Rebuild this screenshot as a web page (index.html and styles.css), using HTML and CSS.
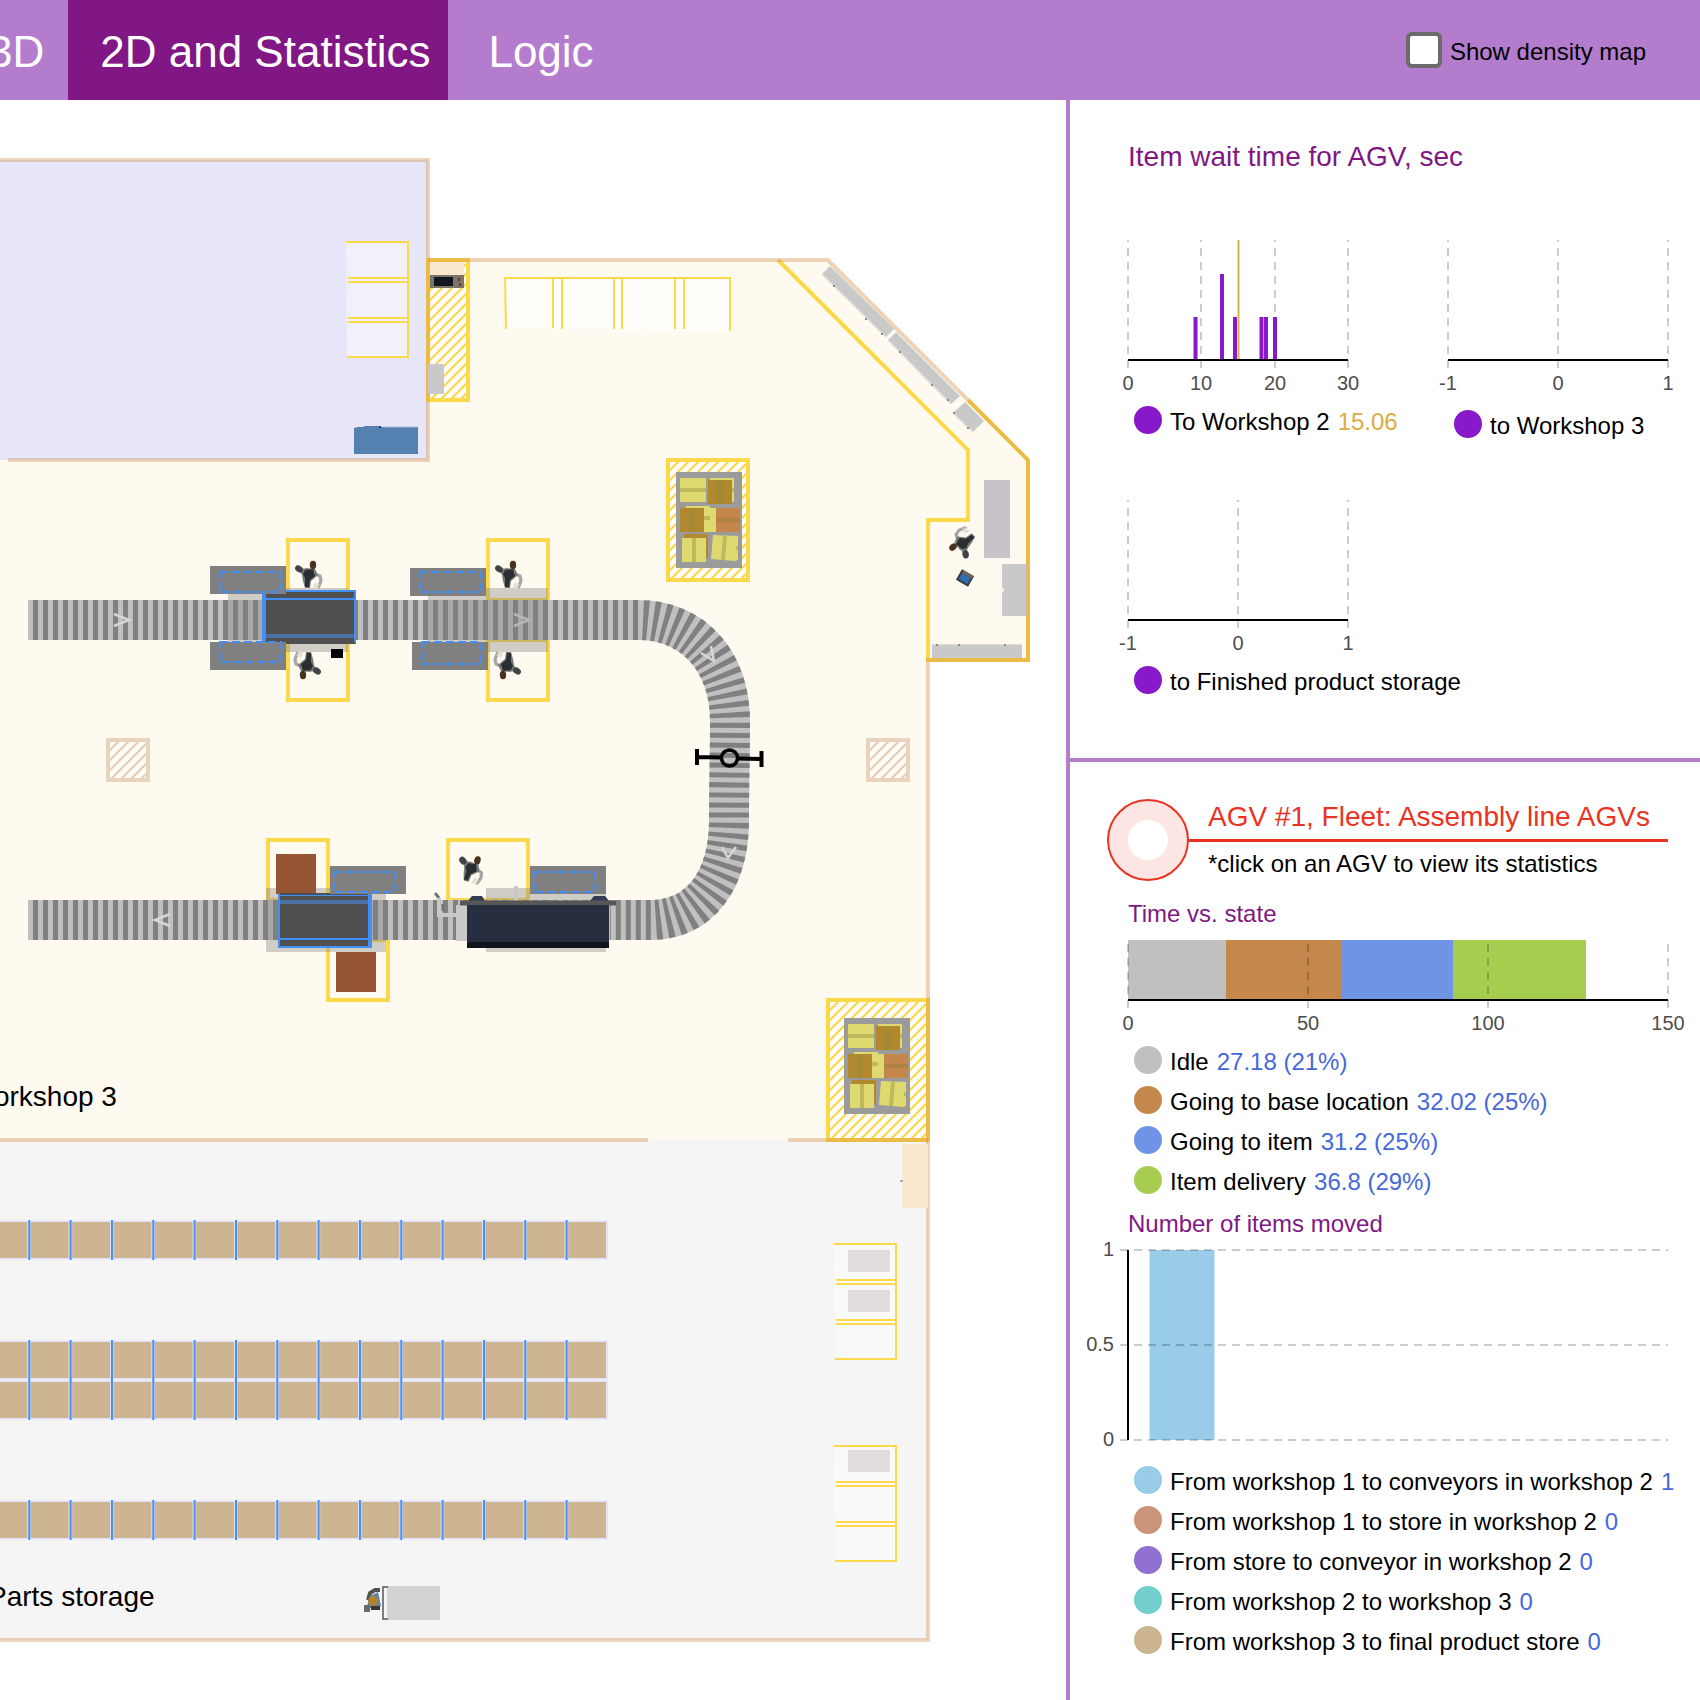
FILE: index.html
```html
<!DOCTYPE html>
<html lang="en">
<head>
<meta charset="utf-8">
<title>AGV simulation: 2D and Statistics</title>
<link rel="stylesheet" href="styles.css">
</head>
<body>
<header class="topbar">
  <nav class="tabs">
    <button class="tab" type="button">3D</button>
    <button class="tab tab--active" type="button">2D and Statistics</button>
    <button class="tab" type="button">Logic</button>
  </nav>
  <div class="density">
    <input class="density__box" type="checkbox" id="density">
    <label class="density__label" for="density">Show density map</label>
  </div>
</header>

<main class="workspace">
  <section class="plan" aria-label="Factory floor plan">
    <svg class="plan__drawing" viewBox="0 100 1066 1600" role="img" aria-label="Workshops, conveyors and parts storage">
      <defs>
        <pattern id="hatch-yellow" width="10" height="10" patternUnits="userSpaceOnUse">
          <rect width="10" height="10" fill="#fffdf8"/>
          <path d="M-2 2L2 -2M-2 12L12 -2M8 12L12 8" stroke="#fad648" stroke-width="2"/>
        </pattern>
        <pattern id="hatch-wall" width="10" height="10" patternUnits="userSpaceOnUse">
          <rect width="10" height="10" fill="#fffcf6"/>
          <path d="M-2 2L2 -2M-2 12L12 -2M8 12L12 8" stroke="#e6cbb2" stroke-width="2"/>
        </pattern>
        <g id="worker">
          <path d="M-9 -6L-2 -4L6 -1L11 1L12 6L9 13" fill="none" stroke="#a3a5a6" stroke-width="3.200"/>
          <path d="M10 9L8 14M5 13L7 8" fill="none" stroke="#d6cdb8" stroke-width="1.500"/>
          <path d="M-9 -4L-3 -7L6 -6L9 0L2 6L1 13L-4 13L-6 6L-7 0Z" fill="#77797b"/>
          <path d="M-4 -5L4 -6L6 1L1 5L0 12L-4 12L-4 3L-6 -1Z" fill="#2b2e31"/>
          <ellipse cx="-10" cy="-6" rx="4.200" ry="3.200" transform="rotate(35 -10 -6)" fill="#3f4346"/>
          <ellipse cx="4" cy="-10" rx="3.200" ry="4.200" fill="#4a3220"/>
        </g>
        <g id="pallet">
          <rect x="676" y="472" width="66" height="96" fill="#9b9b9b"/>
          <path d="M680 478h26v24h-26zM710 478h24v24h-24zM686 506h24v26h-24zM696 508h20v24h-20z" fill="#dfda70"/>
          <path d="M680 490h26M704 518h6M730 490h4" stroke="#bfb95c" stroke-width="4"/>
          <path d="M708 480h24v24h-24zM680 508h24v24h-24zM684 534h24v24h-24z" fill="#b1882e"/>
          <path d="M720 480v24M692 508v24" stroke="#a08a37" stroke-width="4"/>
          <rect x="716" y="508" width="24" height="24" fill="#c4864b"/>
          <path d="M716 520h24" stroke="#ad8445" stroke-width="4"/>
          <rect x="682" y="538" width="24" height="24" fill="#dfda70"/>
          <path d="M694 538v24" stroke="#bfb95c" stroke-width="4"/>
          <path d="M713 535L738 536L738 560L735 561L711 559Z" fill="#dfda70"/>
          <path d="M725 536L723 560M736 548h2" stroke="#bfb95c" stroke-width="4"/>
        </g>
        <g id="rack">
          <path d="M834 1243h62v117h-61z" fill="#fff" fill-opacity=".45"/>
          <path d="M834 1244h62v115h-61M836 1280h60M836 1284h60M836 1320h60M836 1324h60" fill="none" stroke="#fbd94b" stroke-width="2"/>
        </g>
      </defs>

      <!-- floors -->
      <path d="M0 460H428V260H828L1028 460V660H928V1140H0Z" fill="#fffaf0"/>
      <path d="M0 160H428V460H0Z" fill="#e6e6f8"/>
      <path d="M0 1140H928V1640H0Z" fill="#f5f5f5"/>

      <!-- yellow zones -->
      <g stroke="#fbd94b" stroke-width="4" fill="none">
        <rect x="428" y="260" width="40" height="140" fill="url(#hatch-yellow)"/>
        <rect x="668" y="460" width="80" height="120" fill="url(#hatch-yellow)"/>
        <rect x="828" y="1000" width="100" height="140" fill="url(#hatch-yellow)"/>
        <path d="M778 260L968 450V520H928V660H1028V460L968 400"/>
        <rect x="288" y="540" width="60" height="60"/>
        <rect x="288" y="640" width="60" height="60"/>
        <rect x="488" y="540" width="60" height="60"/>
        <rect x="488" y="640" width="60" height="60"/>
        <rect x="268" y="840" width="60" height="60"/>
        <rect x="328" y="940" width="60" height="60"/>
        <rect x="448" y="840" width="80" height="60"/>
      </g>

      <!-- cabinets along the walls -->
      <g fill="#c9c9c9">
        <path d="M822 274L830 266L894 329L886 337Z"/>
        <path d="M888 340L896 332L960 396L951 404Z"/>
        <path d="M953 413L965 402L984 421L973 432Z"/>
        <rect x="984" y="480" width="26" height="78" fill="#c7c3c8"/>
        <rect x="1002" y="564" width="25" height="52"/>
        <rect x="932" y="645" width="90" height="13"/>
      </g>
      <path d="M932 644.500H1022" stroke="#dedddb"/>
      <path d="M822 274L886 337M888 340L951 404M953 413L973 432" stroke="#dddcd8" stroke-width="1.500"/>
      <path d="M833 285h2v2h-2zM865 318h2v2h-2zM881 333h2v2h-2zM899 351h2v2h-2zM931 384h2v2h-2zM947 399h2v2h-2zM953 412h2v2h-2zM967 427h2v2h-2zM936 644h2v2h-2zM958 644h2v2h-2zM1004 644h2v2h-2z" fill="#8c8c8c"/>
      <circle cx="1002.500" cy="590" r="2" fill="#f3f1ea"/>

      <!-- walls -->
      <g fill="none" stroke="#cd853f" stroke-opacity=".35" stroke-width="4">
        <path d="M0 160H428V460H8"/>
        <path d="M428 260H828L1028 460V660H928V1640H0"/>
        <path d="M0 1140H648M788 1140H928"/>
      </g>
      <g fill="url(#hatch-wall)" stroke="#ead3bd" stroke-width="4">
        <rect x="108" y="740" width="40" height="40"/>
        <rect x="868" y="740" width="40" height="40"/>
      </g>

      <!-- equipment by the entrance -->
      <rect x="430" y="262" width="34" height="13" fill="#fae8cf"/>
      <rect x="430" y="275" width="34" height="13" fill="#7d7466"/>
      <rect x="434" y="277" width="19" height="9" fill="#121822"/>
      <path d="M459 278v3M460 283v3" stroke="#6a3a35" stroke-width="2"/>
      <rect x="428" y="364" width="16" height="30" fill="#c9c9c9"/>
      <path d="M354 428l4 -1h5l2 -1h15l2 1h36v27h-64z" fill="#5581b0"/>
      <path d="M384 427h33" stroke="#a9bdd8"/>
      <path d="M380 426v2" stroke="#333f55" stroke-width="2"/>
      <path d="M902 1144H928V1208H902Z" fill="#fae8d0"/>
      <path d="M900 1180h3v2h-3z" fill="#aaa"/>

      <!-- parking bays -->
      <use href="#rack" x="-488" y="-1002"/>
      <use href="#rack"/>
      <use href="#rack" y="202"/>
      <path d="M506 278H730V331L506 328Z" fill="#fff" fill-opacity=".6"/>
      <path d="M506 329L505 278H730V331M553 278V328M562 278V329M614 278V329M622 278V329M675 278V329M684 278V329" fill="none" stroke="#fbd94b" stroke-width="2"/>
      <path d="M848 1250h42v22h-42zM848 1290h42v22h-42zM848 1450h42v22h-42z" fill="#e0dddc"/>

      <!-- pallets -->
      <use href="#pallet"/>
      <use href="#pallet" x="168" y="546"/>

      <!-- conveyor -->
      <g fill="none" stroke-width="40">
        <path d="M28 620H638C692 620 730 660 730 722C730 760 729 780 729 820C729 880 700 920 650 920H608" stroke="#c0c0c0"/>
        <path d="M28 620H638C692 620 730 660 730 722C730 760 729 780 729 820C729 880 700 920 650 920H608" stroke="#808080" stroke-dasharray="5 5" stroke-dashoffset="5"/>
        <path d="M28 920H610" stroke="#c0c0c0"/>
        <path d="M28 920H610" stroke="#808080" stroke-dasharray="5 5" stroke-dashoffset="5"/>
      </g>
      <g fill="none" stroke="#d6d6d6" stroke-width="2.500">
        <path d="M114 614L129 620L114 626"/>
        <path d="M514 614L529 620L514 626"/>
        <path d="M701 653L714 661L711 646"/>
        <path d="M722 847L728 858L736 847"/>
        <path d="M170 914L155 920L170 926"/>
      </g>
      <g fill="none" stroke="#000" stroke-width="4">
        <path d="M697 749V765M761.500 751V767M697 757L721 757.500M738 758.500L761 759"/>
        <circle cx="729.500" cy="758" r="8" stroke-width="3.500"/>
      </g>

      <!-- station footprints -->
      <g fill="#808080" fill-opacity=".37">
        <rect x="228" y="588" width="120" height="64"/>
        <rect x="428" y="588" width="120" height="64"/>
        <rect x="266" y="888" width="120" height="64"/>
        <rect x="486" y="888" width="120" height="64"/>
      </g>
      <!-- machines over the belt -->
      <rect x="263" y="591" width="92" height="52" fill="#505050" stroke="#438ef7" stroke-width="2"/>
      <path d="M264 590V644" stroke="#438ef7" stroke-width="4"/>
      <path d="M264 599H355" stroke="#438ef7" stroke-width="2"/>
      <path d="M266 636H354" stroke="#4a70a6" stroke-width="4"/>
      <path d="M262 643H355" stroke="#505050" stroke-width="2"/>
      <rect x="331" y="649" width="12" height="9" fill="#000"/>
      <path d="M276 854h40v40h-40zM336 952h40v40h-40z" fill="#955434"/>
      <rect x="279" y="895" width="92" height="52" fill="#505050" stroke="#438ef7" stroke-width="2"/>
      <path d="M370 894V948" stroke="#438ef7" stroke-width="4"/>
      <path d="M280 902H368" stroke="#4a70a6" stroke-width="4"/>
      <path d="M280 939H370" stroke="#438ef7" stroke-width="2"/>
      <path d="M280 894H368" stroke="#505050" stroke-width="2"/>
      <path d="M435 893l4 5M443 904v7" stroke="#777" stroke-width="3"/>
      <path d="M439 898v17h20M516 886v16M560 893v9" fill="none" stroke="#c9c9c9" stroke-width="4"/>
      <rect x="456" y="905" width="11" height="36" fill="#c9c9c9"/>
      <path d="M468 901l4 -5h10l3 5zM590 901l4 -5h11l4 5z" fill="#333c50"/>
      <path d="M460 903H616" stroke="#575757" stroke-width="5"/>
      <rect x="467" y="905" width="142" height="43" fill="#262e40"/>
      <rect x="467" y="942" width="142" height="6" fill="#11141c"/>

      <!-- loading tables -->
      <g fill="#808080">
        <rect x="210" y="566" width="76" height="28"/>
        <rect x="210" y="642" width="76" height="28"/>
        <rect x="410" y="568" width="76" height="28"/>
        <rect x="412" y="642" width="76" height="28"/>
        <rect x="330" y="866" width="76" height="28"/>
        <rect x="530" y="866" width="76" height="28"/>
      </g>
      <g fill="none" stroke="#438ef7" stroke-width="2" stroke-dasharray="8 4">
        <rect x="220" y="572" width="61" height="20"/>
        <rect x="220" y="642" width="61" height="20"/>
        <rect x="420" y="572" width="61" height="20"/>
        <rect x="422" y="642" width="59" height="22"/>
        <rect x="334" y="872" width="61" height="20"/>
        <rect x="534" y="872" width="61" height="20"/>
      </g>

      <!-- people -->
      <use href="#worker" x="309" y="575"/>
      <use href="#worker" x="509" y="575"/>
      <use href="#worker" transform="translate(307 665) rotate(180)"/>
      <use href="#worker" transform="translate(507 665) rotate(180)"/>
      <use href="#worker" transform="translate(471 869) rotate(15)"/>
      <use href="#worker" transform="translate(963 543) rotate(226)"/>
      <g transform="translate(965 578) rotate(30)">
        <rect x="-7" y="-6" width="14" height="12" fill="#3a3a3c"/>
        <rect x="-5" y="-3" width="10" height="7" fill="#2f6eb0"/>
        <rect x="-5" y="-6" width="11" height="3" fill="#6f665c"/>
      </g>

      <!-- storage shelves -->
      <g fill="none">
        <path d="M0 1240H608M0 1360H608M0 1400H608M0 1520H608" stroke="#e2e1f5" stroke-width="39"/>
        <path d="M-10.500 1240H606M-10.500 1360H606M-10.500 1400H606M-10.500 1520H606" stroke="#ceb591" stroke-width="36" stroke-dasharray="37.800 3.533"/>
        <path d="M28.300 1240H570M28.300 1360H570M28.300 1400H570M28.300 1520H570" stroke="#438ef7" stroke-width="40" stroke-dasharray="2 39.333"/>
      </g>

      <!-- pallet jack -->
      <rect x="387" y="1586" width="53" height="34" fill="#d3d3d3"/>
      <path d="M388 1587h-5v32h5" fill="none" stroke="#555" stroke-width="1.500"/>
      <path d="M368 1600L370 1593L375 1590L380 1590" fill="none" stroke="#55504a" stroke-width="4"/>
      <path d="M367 1606L370 1596L378 1592L381 1606L372 1609Z" fill="#5b87ab"/>
      <path d="M371 1608L380 1608" stroke="#3a342c" stroke-width="4"/>
      <circle cx="373" cy="1601" r="5" fill="#b5822b"/>
      <rect x="364" y="1605" width="6" height="7" fill="#6a6a6a"/>

      <text class="plan__label" x="-32" y="1106">Workshop 3</text>
      <text class="plan__label" x="-12" y="1606">Parts storage</text>
    </svg>
  </section>

  <aside class="stats">
    <section class="wait">
      <h2 class="wait__title">Item wait time for AGV, sec</h2>
      <div class="wait__grid">
        <div class="panel">
          <svg class="chart" width="220" height="160">
            <path class="grid" d="M0 128V0M73 128V0M147 128V0M220 128V0"/>
            <path fill="#8719cb" d="M65.500 77h4v43h-4zM92 34h4v86h-4zM105 77h4v43h-4zM131.500 77h4v43h-4zM136 77h4v43h-4zM145 77h4v43h-4z"/>
            <path d="M110.500 0V119" stroke="#dbae48" stroke-width="2"/>
            <path class="axis" d="M0 120H220"/>
            <g class="ticks"><text x="0" y="150">0</text><text x="73" y="150">10</text><text x="147" y="150">20</text><text x="220" y="150">30</text></g>
          </svg>
          <ul class="legend">
            <li class="legend__row"><span class="dot dot--violet"></span><span class="legend__text">To Workshop 2</span><span class="legend__text mean">15.06</span></li>
          </ul>
        </div>
        <div class="panel">
          <svg class="chart" width="220" height="160">
            <path class="grid" d="M0 128V0M110 128V0M220 128V0"/>
            <path class="axis" d="M0 120H220"/>
            <g class="ticks"><text x="0" y="150">-1</text><text x="110" y="150">0</text><text x="220" y="150">1</text></g>
          </svg>
          <ul class="legend legend--spaced">
            <li class="legend__row"><span class="dot dot--violet"></span><span class="legend__text">to Workshop 3</span></li>
          </ul>
        </div>
        <div class="panel">
          <svg class="chart" width="220" height="160">
            <path class="grid" d="M0 128V0M110 128V0M220 128V0"/>
            <path class="axis" d="M0 120H220"/>
            <g class="ticks"><text x="0" y="150">-1</text><text x="110" y="150">0</text><text x="220" y="150">1</text></g>
          </svg>
          <ul class="legend">
            <li class="legend__row"><span class="dot dot--violet"></span><span class="legend__text">to Finished product storage</span></li>
          </ul>
        </div>
      </div>
    </section>

    <section class="agv">
      <div class="agv__head">
        <svg class="agv__badge" width="80" height="80" viewBox="0 0 80 80">
          <circle cx="40" cy="40" r="40" fill="#fde5e3" stroke="#e93323" stroke-width="2"/>
          <circle cx="40" cy="40" r="20" fill="#fff"/>
        </svg>
        <div class="agv__caption">
          <h2 class="agv__title">AGV #1, Fleet: Assembly line AGVs</h2>
          <p class="agv__note">*click on an AGV to view its statistics</p>
        </div>
      </div>

      <div class="agv__body">
        <h3 class="agv__subtitle">Time vs. state</h3>
        <svg class="chart" width="540" height="100">
          <path fill="#c0c0c0" d="M0 0h98v60h-98z"/>
          <path fill="#c4884c" d="M98 0h115v60h-115z"/>
          <path fill="#6f94e5" d="M213 0h112v60h-112z"/>
          <path fill="#a6cd50" d="M325 0h133v60h-133z"/>
          <path class="grid" d="M0 68V4M180 68V4M360 68V4M540 68V4"/>
          <path class="axis" d="M0 60H540"/>
          <g class="ticks"><text x="0" y="90">0</text><text x="180" y="90">50</text><text x="360" y="90">100</text><text x="540" y="90">150</text></g>
        </svg>
        <ul class="legend">
          <li class="legend__row"><span class="dot dot--grey"></span><span class="legend__text">Idle</span><span class="legend__text value">27.18 (21%)</span></li>
          <li class="legend__row"><span class="dot dot--brown"></span><span class="legend__text">Going to base location</span><span class="legend__text value">32.02 (25%)</span></li>
          <li class="legend__row"><span class="dot dot--blue"></span><span class="legend__text">Going to item</span><span class="legend__text value">31.2 (25%)</span></li>
          <li class="legend__row"><span class="dot dot--green"></span><span class="legend__text">Item delivery</span><span class="legend__text value">36.8 (29%)</span></li>
        </ul>

        <h3 class="agv__subtitle">Number of items moved</h3>
        <svg class="chart" width="540" height="210">
          <path fill="#98cce8" d="M21.500 0h65v190h-65z"/>
          <path class="grid" d="M-8 0H540M-8 95H540M-8 190H540"/>
          <path class="axis" d="M0 0V190"/>
          <g class="ticks ticks--side"><text x="-14" y="6">1</text><text x="-14" y="101">0.5</text><text x="-14" y="196">0</text></g>
        </svg>
        <ul class="legend">
          <li class="legend__row"><span class="dot dot--sky"></span><span class="legend__text">From workshop 1 to conveyors in workshop 2</span><span class="legend__text value">1</span></li>
          <li class="legend__row"><span class="dot dot--clay"></span><span class="legend__text">From workshop 1 to store in workshop 2</span><span class="legend__text value">0</span></li>
          <li class="legend__row"><span class="dot dot--purple"></span><span class="legend__text">From store to conveyor in workshop 2</span><span class="legend__text value">0</span></li>
          <li class="legend__row"><span class="dot dot--teal"></span><span class="legend__text">From workshop 2 to workshop 3</span><span class="legend__text value">0</span></li>
          <li class="legend__row"><span class="dot dot--tan"></span><span class="legend__text">From workshop 3 to final product store</span><span class="legend__text value">0</span></li>
        </ul>
      </div>
    </section>
  </aside>
</main>
</body>
</html>
```
FILE: styles.css
```css
* {
  box-sizing: border-box;
}

body {
  margin: 0;
  background: #fff;
  color: #000;
  font-family: "Liberation Sans", Arial, sans-serif;
  font-size: 24px;
  line-height: 28px;
}

h2,
h3,
p,
ul {
  margin: 0;
  padding: 0;
  font-weight: normal;
}

/* Top bar */
.topbar {
  display: flex;
  justify-content: space-between;
  height: 100px;
  padding-right: 54px;
  background: #b47ccd;
  overflow: hidden;
}

.tabs {
  display: flex;
  margin-left: -52px;
}

.tab {
  margin: 0;
  padding: 4px 24px 0 40px;
  border: 0;
  background: transparent;
  color: #fff;
  font: inherit;
  font-size: 44px;
  white-space: nowrap;
  cursor: pointer;
}

.tab--active {
  padding: 4px 18px 0 32px;
  background: #801784;
}

.density {
  display: flex;
  align-items: center;
  gap: 8px;
}

.density__box {
  appearance: none;
  width: 36px;
  height: 36px;
  margin: 0;
  border: 4px solid #6b6b6b;
  border-radius: 6px;
  background: #fff;
}

.density__box:checked {
  background: #801784;
}

.density__label {
  padding-top: 4px;
}

/* Workspace */
.workspace {
  display: grid;
  grid-template-columns: minmax(0, 1fr) 634px;
}

.plan {
  overflow: hidden;
}

.plan__drawing {
  display: block;
  width: 100%;
  height: auto;
}

.plan__label {
  font-size: 28px;
}

.stats {
  border-left: 4px solid #b47ccd;
}

/* Charts */
.chart {
  display: block;
  overflow: visible;
}

.grid {
  fill: none;
  stroke: #000;
  stroke-opacity: 0.2;
  stroke-width: 2;
  stroke-dasharray: 8 6;
}

.axis {
  fill: none;
  stroke: #000;
  stroke-width: 2;
}

.ticks {
  fill: #4d4d4d;
  font-size: 20px;
  text-anchor: middle;
}

.ticks--side {
  text-anchor: end;
}

.legend {
  padding-left: 6px;
  list-style: none;
}

.legend--spaced {
  padding-top: 4px;
}

.legend__row {
  display: flex;
  align-items: center;
  gap: 8px;
  height: 40px;
}

.legend__text {
  padding-top: 4px;
  white-space: nowrap;
}

.dot {
  flex: none;
  width: 28px;
  height: 28px;
  border-radius: 50%;
}

.dot--violet { background: #8719cb; }
.dot--grey { background: #c0c0c0; }
.dot--brown { background: #c4884c; }
.dot--blue { background: #6f94e5; }
.dot--green { background: #a6cd50; }
.dot--sky { background: #98cce8; }
.dot--clay { background: #c99478; }
.dot--purple { background: #8f70d2; }
.dot--teal { background: #73cfcb; }
.dot--tan { background: #ceb591; }

.mean {
  color: #dbac43;
}

.value {
  color: #4668dc;
}

/* Wait time section */
.wait {
  padding: 41px 32px 58px 58px;
  border-bottom: 4px solid #b47ccd;
}

.wait__title {
  color: #801784;
  font-size: 28px;
  line-height: 32px;
}

.wait__grid {
  display: grid;
  grid-template-columns: 220px 220px;
  grid-auto-rows: 200px;
  gap: 60px 100px;
  margin-top: 67px;
}

/* Selected vehicle section */
.agv {
  padding: 38px 32px 40px 38px;
}

.agv__head {
  display: flex;
}

.agv__badge {
  flex: none;
  overflow: visible;
}

.agv__caption {
  flex: 1;
}

.agv__title {
  padding: 0 0 5px 20px;
  border-bottom: 3px solid #e93323;
  color: #e93323;
  font-size: 28px;
  line-height: 34px;
  white-space: nowrap;
}

.agv__note {
  padding: 8px 0 0 20px;
}

.agv__body {
  padding: 10px 0 0 20px;
}

.agv__subtitle {
  padding: 10px 0 12px;
  color: #801784;
  font-size: 24px;
}
```
